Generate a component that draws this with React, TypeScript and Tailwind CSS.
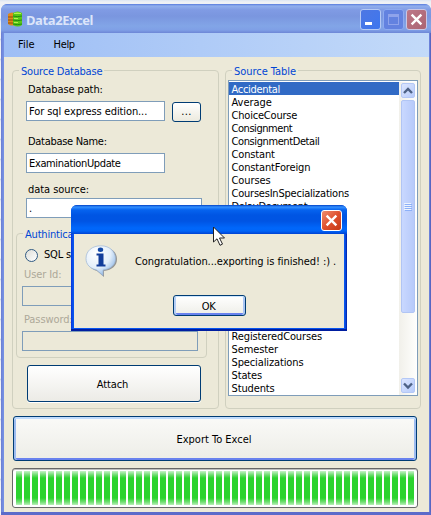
import type { ReactNode } from "react";

const tables = [
  { name: "Accidental", tracking: "tracking-[-0.3px]" },
  { name: "Average", tracking: "tracking-[-0.05px]" },
  { name: "ChoiceCourse", tracking: "tracking-[-0.2px]" },
  { name: "Consignment", tracking: "tracking-[-0.45px]" },
  { name: "ConsignmentDetail", tracking: "tracking-[-0.4px]" },
  { name: "Constant", tracking: "tracking-[-0.15px]" },
  { name: "ConstantForeign", tracking: "tracking-[-0.15px]" },
  { name: "Courses", tracking: "tracking-[-0.1px]" },
  { name: "CoursesInSpecializations", tracking: "tracking-[-0.22px]" },
  { name: "DelayDocument", tracking: "tracking-[-0.3px]" },
];
const lastTables = ["RegisteredCourses", "Semester", "Specializations", "States", "Students"];

function Group({ title, className, children }: { title: string; className: string; children: ReactNode }) {
  return (
    <div className={`flex flex-col rounded-[4px] border border-[#d0d0bf] ${className}`}>
      <div className="-mt-[7px] ml-[6px] h-[14px] shrink-0 self-start bg-[#ece9d8] px-[2px] leading-[16px] text-[#0046d5]">{title}</div>
      {children}
    </div>
  );
}

function Label({ children, className = "" }: { children: ReactNode; className?: string }) {
  return <div className={`h-[14px] shrink-0 leading-[16px] ${className}`}>{children}</div>;
}

function Field({ children, className }: { children?: ReactNode; className: string }) {
  return <div className={`h-[20px] shrink-0 border border-[#7f9db9] pl-[2px] leading-[20px] whitespace-nowrap ${className}`}>{children}</div>;
}

function Database() {
  return (
    <svg width="16" height="16" viewBox="0 0 16 16">
      <path d="M1 3q4-3 8 0v10q-4 3-8 0z" fill="#df8a18" />
      <path d="M1 6h8M1 9h8M1 12h8" stroke="#8f4b12" />
      <path d="M6 2q5-3 9 0v12q-4 3-9 0z" fill="#58c817" />
      <path d="M6 5q4 1.4 9 0M6 9q4 1.4 9 0M6 13q4 1.4 9 0" stroke="#187b13" strokeWidth=".8" fill="none" />
      <path d="M7 2q3-1 7 0v1H7zM7 7h4v1H7zM7 11h4v1H7z" fill="#b6ee50" />
    </svg>
  );
}

function Info() {
  return (
    <svg width="34" height="34" viewBox="0 0 34 34">
      <defs>
        <radialGradient id="bubble" cx=".35" cy=".25" r=".8">
          <stop stopColor="#fff" /><stop offset=".6" stopColor="#e4effa" /><stop offset="1" stopColor="#8db6e5" />
        </radialGradient>
      </defs>
      <path d="M17 2C8 2 2 7 2 14c0 6 4 10 10 12l7 6v-6c8-1 13-5 13-12S26 2 17 2z" fill="#66676c" opacity=".65" />
      <path d="M16 0.8C7 .8 1 6 1 13.5c0 6 4 10 10.5 11.5l6.500 5.500v-5.500c8-1 12.500-5 12.500-11.500S25 .8 16 .8z" fill="url(#bubble)" stroke="#9bb5d6" strokeWidth=".7" />
      <ellipse cx="15.500" cy="4.800" rx="2.700" ry="2.200" fill="#164ba7" />
      <path d="M11.500 8.500h7v11h2v2h-9v-2h2v-9h-2z" fill="#123d9a" />
    </svg>
  );
}

function Chevron({ down = false }: { down?: boolean }) {
  return (
    <div className="flex h-[15px] w-[14px] shrink-0 items-center justify-center rounded-[2px] border border-[#b4c8f6] bg-linear-to-br from-[#dce6ff] to-[#b7cbfa]">
      <svg width="10" height="8" viewBox="0 0 10 8">
        <path d={down ? "M1 1.5l4 4 4-4" : "M1 6l4-4 4 4"} fill="none" stroke="#4d6185" strokeWidth="2.4" />
      </svg>
    </div>
  );
}

function Cross({ size }: { size: number }) {
  return (
    <svg width={size} height={size} viewBox="0 0 12 12">
      <path d="M1.5 1.5l9 9M10.500 1.500l-9 9" stroke="#fff" strokeWidth="2.2" />
    </svg>
  );
}

function TitleBar() {
  return (
    <div className="flex h-[29px] shrink-0 items-start rounded-t-[6px] bg-[linear-gradient(180deg,#587bdc_0,#91afed_2px,#809be4_6px,#7a96df_12px,#82a5e7_22px,#7f9fe6_26px,#6d86d6_29px)] pr-[4px] pl-[6px]">
      <div className="mt-[7px]"><Database /></div>
      <div className="mt-[7px] ml-[3px] font-['Noto_Sans'] text-[13px] leading-[18px] font-bold tracking-[-0.4px] text-[#dce5fa]">Data2Excel</div>
      <div className="mt-[5px] ml-auto flex gap-[2px]">
        <div className="flex h-[21px] w-[21px] items-end rounded-[3px] border border-[#b6caf5] bg-linear-to-br from-[#4d77e3] to-[#3d76ef] pb-[4px] pl-[4px]"><div className="h-[3px] w-[7px] bg-white" /></div>
        <div className="flex h-[21px] w-[21px] items-center justify-center rounded-[3px] border border-[#8daaf0] bg-[#6382e0]"><div className="h-[11px] w-[11px] border border-t-[3px] border-[#8fa3eb]" /></div>
        <div className="flex h-[21px] w-[21px] items-center justify-center rounded-[3px] border border-[#c9c7e5] bg-linear-to-br from-[#bd7788] to-[#ab6472]"><Cross size={13} /></div>
      </div>
    </div>
  );
}

function SourceDatabase() {
  return (
    <Group title="Source Database" className="h-[339px] w-[207px] tracking-[-0.2px]">
      <Label className="mt-[4px] ml-[15px] tracking-[-0.1px]">Database path:</Label>
      <div className="mt-[5px] ml-[13px] flex gap-[7px]">
        <Field className="w-[139px] bg-white tracking-[-0.1px]">For sql express edition...</Field>
        <div className="mt-px h-[20px] w-[29px] rounded-[3px] border border-[#003c74] bg-linear-to-b from-white to-[#eceade] text-center leading-[18px] tracking-[0.4px]">...</div>
      </div>
      <Label className="mt-[12px] ml-[15px] tracking-[-0.3px]">Database Name:</Label>
      <Field className="mt-[5px] ml-[13px] w-[139px] bg-white tracking-[-0.36px]">ExaminationUpdate</Field>
      <Label className="mt-[9px] ml-[15px] tracking-[-0.05px]">data source:</Label>
      <Field className="mt-[2px] ml-[13px] w-[176px] bg-white">.</Field>
      <Group title="Authintication" className="mt-[15px] ml-[3px] h-[125px] w-[191px] shrink-0">
        <div className="mt-[7px] ml-[8px] flex h-[14px] shrink-0 items-center">
          <div className="h-[13px] w-[13px] rounded-full border border-[#315b84] bg-linear-to-br from-[#deded8] to-white" />
          <span className="ml-[6px] leading-[14px]">SQL server</span>
        </div>
        <Label className="mt-[5px] ml-[7px] tracking-[-0.1px] text-[#aca899]">User Id:</Label>
        <Field className="mt-[5px] ml-[5px] w-[176px]" />
        <Label className="mt-[6px] ml-[7px] tracking-[-0.1px] text-[#aca899]">Password:</Label>
        <Field className="mt-[5px] ml-[5px] w-[176px]" />
      </Group>
      <div className="mt-[7px] ml-[14px] h-[37px] w-[174px] shrink-0 rounded-[3px] border border-[#003c74] bg-linear-to-b from-white to-[#ecebe6] pr-[3px] text-center leading-[37px] tracking-[-0.1px] shadow-[0_1px_0_#fff]">Attach</div>
    </Group>
  );
}

function SourceTable() {
  return (
    <Group title="Source Table" className="h-[339px] w-[196px] tracking-[-0.05px]">
      <div className="mt-[2px] ml-[2px] flex h-[316px] w-[190px] shrink-0 border border-[#7f9db9] bg-white pt-px">
        <div className="flex w-[170px] flex-col">
          {tables.map(({ name, tracking }, i) => (
            <div key={name} className={`h-[13px] shrink-0 pl-[2.5px] leading-[15px] ${tracking} ${i === 0 ? "bg-[#316ac5] text-white" : ""}`}>{name}</div>
          ))}
          <div className="h-[117px] shrink-0" />
          {lastTables.map((name) => (
            <div key={name} className="h-[13px] shrink-0 pl-[2.5px] leading-[15px] tracking-[-0.12px]">{name}</div>
          ))}
        </div>
        <div className="flex w-[17px] flex-col items-center bg-linear-to-r from-[#f1f0ea] to-[#fefefc] pt-px">
          <Chevron />
          <div className="mt-[2px] flex h-[213px] w-[14px] shrink-0 flex-col items-center justify-center gap-px rounded-[2px] border border-[#b1c5f4] bg-linear-to-r from-[#c9d8ff] to-[#b7cafa]">
            {[0, 1, 2, 3].map((n) => <div key={n} className="h-px w-[7px] bg-[#eef4fe] shadow-[1px_1px_0_#8cb0f8]" />)}
          </div>
          <div className="mt-[65px]"><Chevron down /></div>
        </div>
      </div>
    </Group>
  );
}

function MessageBox() {
  return (
    <div className="absolute top-[205px] left-[71px] flex h-[126px] w-[276px] flex-col rounded-t-[6px] bg-[linear-gradient(90deg,#0831d9_0,#0855ee_2px,#0855ee_274px,#001ea0_276px)] px-[3px] pb-[3px] shadow-[inset_0_-2px_0_#001ea0]">
      <div className="-mx-[3px] flex h-[29px] shrink-0 justify-end rounded-t-[6px] bg-[linear-gradient(180deg,#0040c4_0,#3490ff_2px,#0663ef_5px,#0055e3_10px,#0054e3_16px,#0067fb_23px,#0065f8_26px,#0042d2_29px)] pt-[5px] pr-[5px]">
        <div className="flex h-[21px] w-[21px] items-center justify-center rounded-[3px] border border-white bg-linear-to-br from-[#ee8c6d] via-[#df512e] to-[#c53813]"><Cross size={13} /></div>
      </div>
      <div className="flex flex-1 flex-col bg-[#ece9d8]">
        <div className="flex pt-[11px] pl-[11px]">
          <Info />
          <div className="mt-[10px] ml-[16px] leading-[14px] whitespace-nowrap tracking-[-0.07px]">Congratulation...exporting is finished! :) .</div>
        </div>
        <div className="mt-[16px] ml-[99px] h-[21px] w-[73px] rounded-[3px] border border-[#003c74] bg-linear-to-b from-white to-[#eeeee8] pr-[2px] text-center leading-[21px] tracking-[-0.5px] shadow-[inset_0_1px_0_#cee7ff,inset_2px_0_0_#b5cef5,inset_-2px_0_0_#a9c5f3,inset_0_-2px_0_#6982ee]">OK</div>
      </div>
    </div>
  );
}

export default function App() {
  return (
    <div className="relative h-[515px] w-[431px] overflow-hidden bg-[repeating-linear-gradient(180deg,#dce5f3_0,#eff1f5_2px,#f4f5f8_18px,#c8d0e0_20px)] pt-[4px] pl-px font-['DejaVu_Sans_Condensed','DejaVu_Sans',sans-serif] text-[11px] text-black">
      <div className="flex h-[511px] w-[430px] flex-col rounded-t-[7px] bg-[linear-gradient(90deg,#6a7cce_0,#7590e4_2px,#7590e4_428px,#4e58b7_430px)] shadow-[inset_0_-3px_0_#5b6bca]">
        <TitleBar />
        <div className="mr-[2px] ml-[3px] flex h-[24px] shrink-0 items-center bg-linear-to-r from-[#9ebef5] to-[#c3daf9] pt-px pl-[14px]">
          <span>File</span><span className="ml-[19px] tracking-[-0.3px]">Help</span>
        </div>
        <div className="mr-[2px] mb-[3px] ml-[3px] flex flex-1 flex-col bg-[#ece9d8] pt-[13px] pl-[8px]">
          <div className="flex h-[339px] shrink-0 gap-[6px]"><SourceDatabase /><SourceTable /></div>
          <div className="mt-[7px] ml-px h-[45px] w-[404px] shrink-0 rounded-[3px] border border-[#003c74] bg-linear-to-b from-[#fafaf8] to-[#ededE7] pr-[2px] text-center leading-[45px] shadow-[inset_0_2px_0_#c1dcfc,inset_2px_0_0_#9dbcf0,inset_-2px_0_0_#9dbcf0,inset_0_-2px_0_#6982ee]">Export To Excel</div>
          <div className="mt-[7px] h-[40px] w-[406px] shrink-0 rounded-[3px] border border-[#686868] bg-white pt-[2px] pr-px pl-[3px] shadow-[inset_0_1px_0_#bebebe]">
            <div className="h-[34px] bg-[repeating-linear-gradient(90deg,transparent_0,transparent_6px,#fff_6px,#fff_8px),linear-gradient(180deg,#c7f3c9_0,#6bdd6d_4px,#2bd32e_7px,#2bd32e_27px,#71df73_31px,#b9efbb_34px)]" />
          </div>
        </div>
      </div>
      <MessageBox />
      <svg className="absolute top-[226px] left-[212px]" width="14" height="21" viewBox="0 0 14 21">
        <path d="M1.500 1v15l3.500-3.200 3 6.500 2.500-1.200-3-6.100h5z" fill="#fff" stroke="#222" strokeWidth="1" />
      </svg>
    </div>
  );
}
